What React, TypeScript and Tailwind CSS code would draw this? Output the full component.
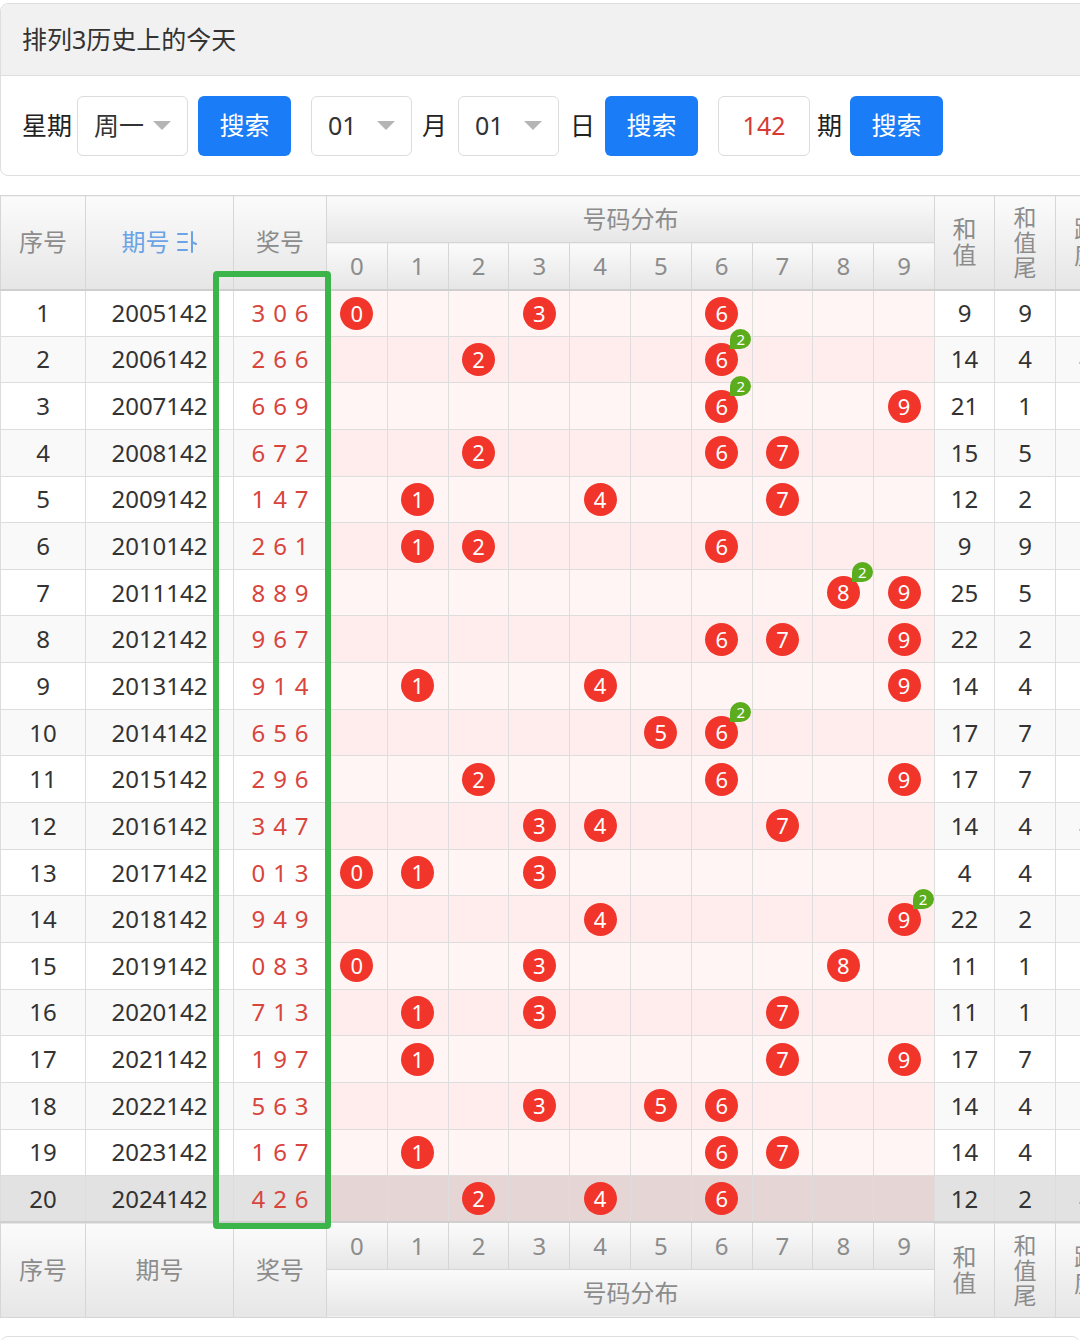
import React from 'react';

const draws = [
  ['2005142', '306'],
  ['2006142', '266'],
  ['2007142', '669'],
  ['2008142', '672'],
  ['2009142', '147'],
  ['2010142', '261'],
  ['2011142', '889'],
  ['2012142', '967'],
  ['2013142', '914'],
  ['2014142', '656'],
  ['2015142', '296'],
  ['2016142', '347'],
  ['2017142', '013'],
  ['2018142', '949'],
  ['2019142', '083'],
  ['2020142', '713'],
  ['2021142', '197'],
  ['2022142', '563'],
  ['2023142', '167'],
  ['2024142', '426'],
];

const digits = [0, 1, 2, 3, 4, 5, 6, 7, 8, 9];

const Caret = () => (
  <svg width="18" height="9" viewBox="0 0 18 9" className="shrink-0">
    <path d="M0 0 L18 0 L9 9 Z" fill="#b5b5b5" />
  </svg>
);

const SortIcon = () => (
  <svg width="22" height="24" viewBox="0 0 22 24" className="ml-[6px]">
    <g stroke="#6aa3e6" strokeWidth="2" fill="none" strokeLinecap="round">
      <path d="M2 4 H11" />
      <path d="M2 12 H11" />
      <path d="M2 20 H11" />
      <path d="M16 2 V22" />
      <path d="M16 12 L20 14" />
    </g>
  </svg>
);

const SearchBtn = ({ className = '' }: { className?: string }) => (
  <button className={`w-[93px] h-[60px] rounded-[6px] bg-[#1a7cf6] text-white text-[25px] ${className}`}>
    搜索
  </button>
);

const Select = ({ value, className = '' }: { value: string; className?: string }) => (
  <div
    className={`h-[60px] rounded-[6px] border-[1.5px] border-[#dcdcdc] bg-white flex items-center justify-between pl-[16px] pr-[16px] text-[25px] text-[#333] ${className}`}
  >
    <span>{value}</span>
    <Caret />
  </div>
);

const Ball = ({ n, badge }: { n: number; badge?: number }) => (
  <div className="relative mx-auto w-[33px] h-[33px] rounded-full bg-[#f1352b] text-white text-[22px] leading-[33px] text-center">
    {n}
    {badge ? (
      <span className="absolute left-[25px] top-[-14px] w-[21px] h-[20px] rounded-[50%_50%_50%_0] bg-[#5bad1e] text-[15px] leading-[20px] text-white text-center">
        {badge}
      </span>
    ) : null}
  </div>
);

const headCell = 'bg-linear-to-b from-[#fbfbfb] to-[#e6e6e6] border border-[#d6d6d6] text-[#8c8c8c] text-center font-normal';

const App = () => {
  return (
    <div className="w-[1080px] h-[1340px] overflow-hidden bg-white font-['Noto_Sans','Noto_Sans_CJK_SC',sans-serif]">
      {/* Search card */}
      <div className="mt-[3px] mr-[-12px] border border-[#dedede] rounded-[8px] overflow-hidden">
        <div className="h-[72px] bg-[#f1f1f1] border-b border-[#dedede] flex items-center pl-[21px] text-[25px] text-[#333]">
          排列3历史上的今天
        </div>
        <div className="h-[99px] flex items-center pl-[21px] text-[25px] text-[#222]">
          <span>星期</span>
          <Select value="周一" className="ml-[5px] w-[111px]" />
          <SearchBtn className="ml-[10px]" />
          <Select value="01" className="ml-[20px] w-[101px]" />
          <span className="ml-[10px]">月</span>
          <Select value="01" className="ml-[11px] w-[101px]" />
          <span className="ml-[11px]">日</span>
          <SearchBtn className="ml-[10px]" />
          <div className="ml-[20px] w-[92px] h-[60px] rounded-[6px] border-[1.5px] border-[#dcdcdc] flex items-center justify-center text-[#d63b35]">
            142
          </div>
          <span className="ml-[7px]">期</span>
          <SearchBtn className="ml-[8px]" />
        </div>
      </div>

      {/* Trend table */}
      <div className="relative mt-[19px]">
        <table className="table-fixed border-collapse w-[1116px] text-[24px]">
          <colgroup>
            <col className="w-[85px]" />
            <col className="w-[148px]" />
            <col className="w-[93px]" />
            {digits.map((d) => (
              <col key={d} className="w-[60.8px]" />
            ))}
            <col className="w-[60px]" />
            <col className="w-[61px]" />
            <col className="w-[61px]" />
          </colgroup>
          <thead>
            <tr className="h-[47px]">
              <th rowSpan={2} className={headCell}>序号</th>
              <th rowSpan={2} className={`${headCell} !text-[#6aa3e6]`}>
                <span className="inline-flex items-center">
                  期号
                  <SortIcon />
                </span>
              </th>
              <th rowSpan={2} className={headCell}>奖号</th>
              <th colSpan={10} className={headCell}>号码分布</th>
              <th rowSpan={2} className={`${headCell} leading-[26px]`}>和<br />值</th>
              <th rowSpan={2} className={`${headCell} text-[23px] leading-[25px]`}>和<br />值<br />尾</th>
              <th rowSpan={2} className={`${headCell} leading-[26px]`}>跨<br />度</th>
            </tr>
            <tr className="h-[47px] border-b-2 border-[#cfcfcf]">
              {digits.map((d) => (
                <th key={d} className={headCell}>{d}</th>
              ))}
            </tr>
          </thead>
          <tbody>
            {draws.map(([issue, code], i) => {
              const nums = code.split('').map(Number);
              const sum = nums.reduce((a, b) => a + b, 0);
              const span = Math.max(...nums) - Math.min(...nums);
              const last = i === draws.length - 1;
              const even = i % 2 === 1;
              const leftBg = last ? 'bg-[#e2e2e2]' : even ? 'bg-[#f9f9f9]' : 'bg-white';
              const distBg = last ? 'bg-[#e6d5d5]' : even ? 'bg-[#ffeded]' : 'bg-[#fff5f4]';
              const cell = `border border-[#dddddd] text-center text-[#333] ${leftBg}`;
              return (
                <tr key={issue} className="h-[46.65px]">
                  <td className={cell}>{i + 1}</td>
                  <td className={cell}>{issue}</td>
                  <td className={cell}>
                    <div className="flex justify-center gap-[8px] text-[#d8453d]">
                      {nums.map((n, k) => (
                        <span key={k}>{n}</span>
                      ))}
                    </div>
                  </td>
                  {digits.map((d) => {
                    const count = nums.filter((n) => n === d).length;
                    return (
                      <td key={d} className={`border border-[#dddddd] ${distBg}`}>
                        {count > 0 ? <Ball n={d} badge={count > 1 ? count : undefined} /> : null}
                      </td>
                    );
                  })}
                  <td className={cell}>{sum}</td>
                  <td className={cell}>{sum % 10}</td>
                  <td className={cell}>{span}</td>
                </tr>
              );
            })}
          </tbody>
          <tfoot>
            <tr className="h-[47px] border-t-2 border-[#cfcfcf]">
              <th rowSpan={2} className={headCell}>序号</th>
              <th rowSpan={2} className={headCell}>期号</th>
              <th rowSpan={2} className={headCell}>奖号</th>
              {digits.map((d) => (
                <th key={d} className={headCell}>{d}</th>
              ))}
              <th rowSpan={2} className={`${headCell} leading-[26px]`}>和<br />值</th>
              <th rowSpan={2} className={`${headCell} text-[23px] leading-[25px]`}>和<br />值<br />尾</th>
              <th rowSpan={2} className={`${headCell} leading-[26px]`}>跨<br />度</th>
            </tr>
            <tr className="h-[48px]">
              <th colSpan={10} className={headCell}>号码分布</th>
            </tr>
          </tfoot>
        </table>

        {/* highlight around the winning numbers column */}
        <div className="absolute left-[213px] top-[76px] w-[118px] h-[958px] border-[6px] border-[#3bb44a] rounded-[4px] pointer-events-none" />
      </div>

      <div className="mt-[18px] h-[20px] border border-[#dedede] rounded-t-[8px]" />
    </div>
  );
};

export default App;
